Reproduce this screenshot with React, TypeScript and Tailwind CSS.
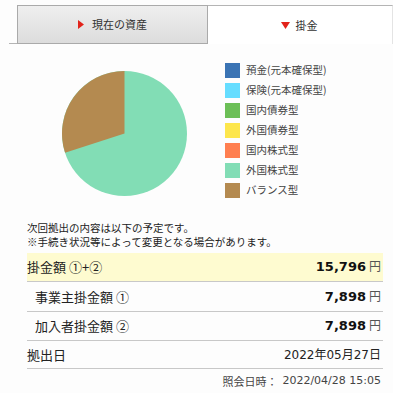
const legend = [
  { name: "預金(元本確保型)", color: "bg-[#3b74b4]" },
  { name: "保険(元本確保型)", color: "bg-[#66ddff]" },
  { name: "国内債券型", color: "bg-[#6cbf57]" },
  { name: "外国債券型", color: "bg-[#fde64c]" },
  { name: "国内株式型", color: "bg-[#ff7f50]" },
  { name: "外国株式型", color: "bg-[#82ddb5]" },
  { name: "バランス型", color: "bg-[#b48a50]" },
];

const jp = "font-['Noto_Sans_CJK_JP',sans-serif]";
const num = "font-['DejaVu_Sans','Noto_Sans_CJK_JP',sans-serif]";

const Amount = ({ value }: { value: string }) => (
  <div className="flex items-baseline gap-[3px]">
    <span className={`${num} text-[13px] font-bold text-[#111]`}>{value}</span>
    <span className={`${jp} text-[12px] text-[#555]`}>円</span>
  </div>
);

export default function App() {
  return (
    <div className={`w-[393px] h-[393px] overflow-hidden bg-[#fdfdfd] text-[#333] ${jp}`}>
      {/* tabs */}
      <div className="flex pt-[5px] pl-[9px]">
        <div className="w-[8px] h-[39px] border-b border-[#b4b4b4]" />
        <div className="w-[191px] h-[39px] border border-[#aaa] bg-gradient-to-b from-[#efefef] to-[#dcdcdc] flex items-center justify-center gap-[8px]">
          <svg width="6" height="9" viewBox="0 0 6 9">
            <path d="M0 0 L6 4.5 L0 9 Z" fill="#e2231a" />
          </svg>
          <span className="text-[11px] text-[#333]">現在の資産</span>
        </div>
        <div className="flex-1 h-[39px] border-t border-r border-t-[#b4b4b4] border-r-[#e4e4e4] bg-white flex items-center justify-center gap-[6px] pr-[2px]">
          <svg width="9" height="7" viewBox="0 0 9 7">
            <path d="M0 0 L9 0 L4.5 7 Z" fill="#e2231a" />
          </svg>
          <span className="text-[11px] text-[#333]">掛金</span>
        </div>
      </div>

      {/* chart + legend */}
      <div className="flex items-start pl-[62px]">
        <svg className="mt-[27px]" width="125" height="125" viewBox="0 0 125 125">
          <circle cx="62.5" cy="62.5" r="62.5" fill="#82ddb5" />
          <path d="M62.5 62.5 L62.5 0 A62.5 62.5 0 0 0 3.06 81.8 Z" fill="#b48a50" />
        </svg>
        <div className="ml-[38px] pt-[19px] flex flex-col gap-[5px]">
          {legend.map((l) => (
            <div key={l.name} className="flex items-center gap-[6px] h-[15px]">
              <div className={`w-[15px] h-[15px] ${l.color}`} />
              <span className="text-[10.5px] text-[#444] leading-none">{l.name}</span>
            </div>
          ))}
        </div>
      </div>

      {/* note */}
      <div className="mt-[23px] px-[27px] text-[10.5px] leading-[14px] text-[#222]">
        <p>次回拠出の内容は以下の予定です。</p>
        <p>※手続き状況等によって変更となる場合があります。</p>
      </div>

      {/* table */}
      <div className="mt-[4px] ml-[27px] mr-[10px] text-[#222]">
        <div className="h-[29px] bg-[#fefbd0] border-b border-[#c8c8c8] flex items-center justify-between pr-[2px]">
          <span className="text-[13px]">掛金額 ①+②</span>
          <Amount value="15,796" />
        </div>
        <div className="h-[30px] border-b border-[#c8c8c8] flex items-center justify-between pl-[8px] pr-[2px]">
          <span className="text-[13px]">事業主掛金額 ①</span>
          <Amount value="7,898" />
        </div>
        <div className="h-[29px] border-b border-[#c8c8c8] flex items-center justify-between pl-[8px] pr-[2px]">
          <span className="text-[13px]">加入者掛金額 ②</span>
          <Amount value="7,898" />
        </div>
        <div className="h-[28px] border-b border-[#c8c8c8] flex items-center justify-between pr-[2px]">
          <span className="text-[13px]">拠出日</span>
          <span className={`${num} text-[12px]`}>2022年05月27日</span>
        </div>
        <div className="h-[24px] flex items-center justify-end gap-[5px] pr-[2px] text-[11px] text-[#444]">
          <span>照会日時：</span>
          <span className={num}>2022/04/28 15:05</span>
        </div>
      </div>
    </div>
  );
}
